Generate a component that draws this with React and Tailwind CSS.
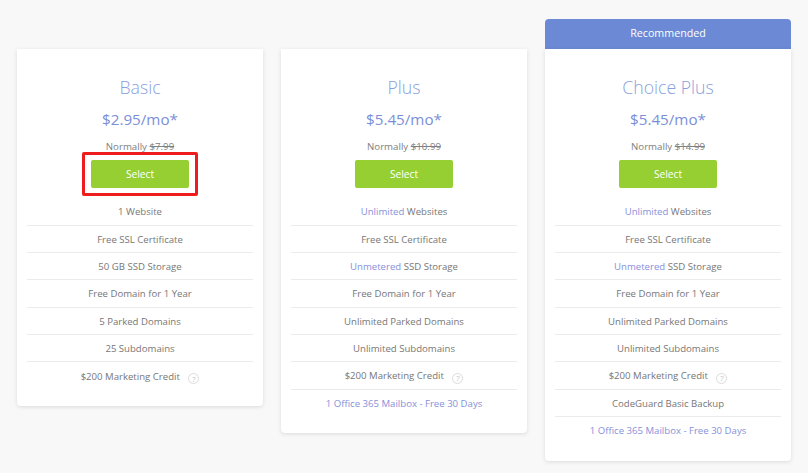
import React from "react";

const b = (t) => <span className="text-[#8791da]">{t}</span>;

const Help = () => (
  <span className="ml-[6px] inline-flex h-[11px] w-[11px] items-center justify-center rounded-full border border-[#dcdcdc] align-[-2px] text-[8px] leading-none text-[#c4c4c4]">
    ?
  </span>
);

const plans = [
  {
    name: "Basic",
    price: "$2.95/mo*",
    old: "$7.99",
    highlight: true,
    rows: [
      "1 Website",
      "Free SSL Certificate",
      "50 GB SSD Storage",
      "Free Domain for 1 Year",
      "5 Parked Domains",
      "25 Subdomains",
      <>$200 Marketing Credit <Help /></>,
    ],
  },
  {
    name: "Plus",
    price: "$5.45/mo*",
    old: "$10.99",
    rows: [
      <>{b("Unlimited")} Websites</>,
      "Free SSL Certificate",
      <>{b("Unmetered")} SSD Storage</>,
      "Free Domain for 1 Year",
      "Unlimited Parked Domains",
      "Unlimited Subdomains",
      <>$200 Marketing Credit <Help /></>,
      b("1 Office 365 Mailbox - Free 30 Days"),
    ],
  },
  {
    name: "Choice Plus",
    price: "$5.45/mo*",
    old: "$14.99",
    recommended: true,
    rows: [
      <>{b("Unlimited")} Websites</>,
      "Free SSL Certificate",
      <>{b("Unmetered")} SSD Storage</>,
      "Free Domain for 1 Year",
      "Unlimited Parked Domains",
      "Unlimited Subdomains",
      <>$200 Marketing Credit <Help /></>,
      "CodeGuard Basic Backup",
      b("1 Office 365 Mailbox - Free 30 Days"),
    ],
  },
];

function Plan({ plan }) {
  return (
    <div className="w-[246px]">
      {/* spacer keeps the cards lined up when there is no banner */}
      {plan.recommended ? (
        <div className="flex h-[30px] items-center justify-center rounded-t-[4px] bg-[#6b89d4] pb-[1px] text-[10.7px] text-white">
          Recommended
        </div>
      ) : (
        <div className="h-[30px]" />
      )}
      <div className="rounded-b-[4px] bg-white px-[10px] pt-[27px] pb-[16.5px] text-center shadow-[0_1px_4px_rgba(0,0,0,0.12)]">
        <h2 className="text-[17.7px] leading-[22px] font-light text-[#8a9fdd]">{plan.name}</h2>
        <div className="mt-[10px] text-[15.2px] leading-[22px] text-[#7a8fd8]">{plan.price}</div>
        <div className="mt-[10px] text-[9.7px] leading-[14px] text-[#808080]">
          Normally <span className="line-through">{plan.old}</span>
        </div>
        <div className="mt-[6px] flex justify-center">
          <div className={plan.highlight ? "-my-[8px] rounded-[2px] border-[3px] border-[#ee1c1c] px-[6px] py-[5px]" : ""}>
            <button className="block h-[28px] w-[98px] rounded-[2px] bg-[#95cf32] pt-[1px] text-[10.2px] text-white">Select</button>
          </div>
        </div>
        <ul className="mt-[10.5px] text-[9.6px] text-[#777]">
          {plan.rows.map((row, i) => (
            <li key={i} className="flex h-[27.3px] items-center justify-center border-b border-[#ebebeb] pt-[2px] last:border-b-0">
              <span>{row}</span>
            </li>
          ))}
        </ul>
      </div>
    </div>
  );
}

export default function App() {
  return (
    <div className="flex h-[473px] w-[808px] items-start gap-[18px] overflow-hidden bg-[#f8f8f8] pt-[19px] pl-[17px] font-['Open_Sans',sans-serif]">
      {plans.map((p) => (
        <Plan key={p.name} plan={p} />
      ))}
    </div>
  );
}
